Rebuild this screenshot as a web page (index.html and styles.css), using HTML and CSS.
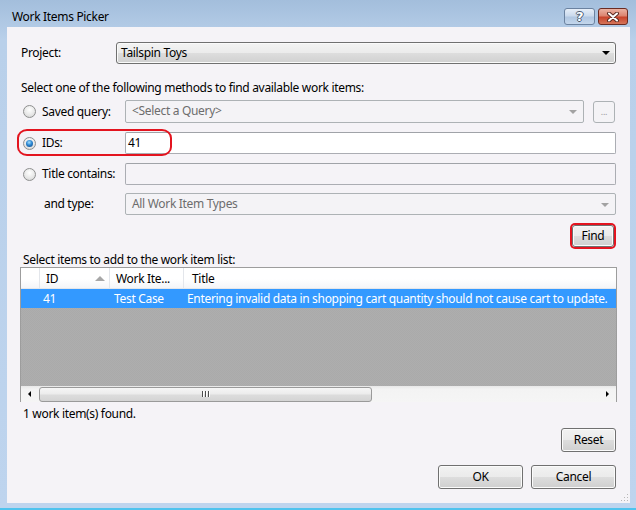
FILE: index.html
```html
<!doctype html>
<html>
<head>
<meta charset="utf-8">
<title>Work Items Picker</title>
<link rel="stylesheet" href="styles.css">
</head>
<body>
	<div id="window">
		<div class="titlebar">
			<span class="title">Work Items Picker</span>
			<span class="cap help">?</span>
			<span class="cap close">
				<svg width="14" height="10" viewBox="0 0 14 10"><path d="M3 1.5 L11 8.5 M11 1.5 L3 8.5" stroke="#5a2a22" stroke-width="4" stroke-linecap="round"/><path d="M3 1.5 L11 8.5 M11 1.5 L3 8.5" stroke="#fff" stroke-width="2" stroke-linecap="round"/></svg>
			</span>
		</div>
		<div class="client">
			<div class="row">
				<span class="plabel">Project:</span>
				<div class="combo active">Tailspin Toys<span class="arrow"></span></div>
			</div>
			<p class="hint">Select one of the following methods to find available work items:</p>
			<div class="row method saved">
				<span class="radio"></span>
				<span class="mlabel">Saved query:</span>
				<div class="combo off">&lt;Select a Query&gt;<span class="arrow"></span></div>
				<span class="browse">...</span>
			</div>
			<div class="row method ids">
				<span class="radio checked"></span>
				<span class="mlabel">IDs:</span>
				<div class="textbox">41</div>
				<span class="mark"></span>
			</div>
			<div class="row method">
				<span class="radio"></span>
				<span class="mlabel">Title contains:</span>
				<div class="textbox off"></div>
			</div>
			<div class="row method type">
				<span class="mlabel">and type:</span>
				<div class="combo off">All Work Item Types<span class="arrow"></span></div>
			</div>
			<div class="findrow">
				<span class="btn find">Find</span>
			</div>
			<p class="caption">Select items to add to the work item list:</p>
			<div class="grid">
				<div class="ghead">
					<span class="c0"></span>
					<span class="c1">ID<i class="sort"></i></span>
					<span class="c2">Work Ite...</span>
					<span class="c3">Title</span>
				</div>
				<div class="grow selected">
					<span class="c0"></span>
					<span class="c1">41</span>
					<span class="c2">Test Case</span>
					<span class="c3">Entering invalid data in shopping cart quantity should not cause cart to update.</span>
				</div>
				<div class="gbody"></div>
				<div class="hscroll">
					<span class="sarrow left"></span>
					<span class="thumb"><i></i><i></i><i></i></span>
					<span class="track"></span>
					<span class="sarrow right"></span>
				</div>
			</div>
			<p class="caption status">1 work item(s) found.</p>
			<div class="buttons reset">
				<span class="btn">Reset</span>
			</div>
			<div class="buttons">
				<span class="btn wide">OK</span>
				<span class="btn wide">Cancel</span>
			</div>
			<span class="grip"></span>
		</div>
	</div>
</body>
</html>
```
FILE: styles.css
```css
body {
	margin: 0;
	font: 12px/16px "Noto Sans", "Liberation Sans", sans-serif;
	letter-spacing: -0.32px;
	color: #000;
}
p {
	margin: 0;
}
#window {
	width: 636px;
	height: 510px;
	box-sizing: border-box;
	display: flex;
	flex-direction: column;
	background: linear-gradient(#a3bedc 0, #b9d0ea 40px, #bed4ee 100%);
	border-bottom: 2px solid #4fc3ee;
}
.titlebar {
	height: 27px;
	display: flex;
	align-items: flex-start;
	padding: 0 8px 0 12px;
}
.title {
	margin-top: 9px;
	line-height: 16px;
	flex: 1;
}
.cap {
	margin-top: 8px;
	height: 17px;
	box-sizing: border-box;
	border-radius: 3px;
	display: flex;
	align-items: center;
	justify-content: center;
}
.help {
	width: 31px;
	margin-right: 3px;
	border: 1px solid #6b82a0;
	background: linear-gradient(#e6eef8 0, #cbdaed 45%, #b1c7e2 55%, #c3d6ec 100%);
	color: #fff;
	font: bold 13px/14px "DejaVu Sans", sans-serif;
	text-shadow: -1px 0 #4a5a70, 1px 0 #4a5a70, 0 -1px #4a5a70, 0 1px #4a5a70;
}
.close {
	width: 30px;
	border: 1px solid #6a2b22;
	background: linear-gradient(#eab2a3 0, #dc8470 45%, #c8442c 55%, #d5755a 100%);
}
.client {
	flex: 1;
	margin: 0 6px 5px 7px;
	background: #f5f3f7;
	padding: 15px 14px 0;
	position: relative;
}
.row {
	display: flex;
	align-items: center;
	height: 22px;
	position: relative;
}
.plabel {
	width: 95px;
}
.combo {
	flex: 1;
	height: 100%;
	box-sizing: border-box;
	border-radius: 3px;
	position: relative;
	padding-left: 4px;
	line-height: 20px;
}
.combo.active {
	border: 1px solid #707070;
	background: linear-gradient(#f3f3f3 0, #ebebeb 50%, #dddddd 51%, #d0d0d0 100%);
	box-shadow: inset 0 0 0 1px #fafafa;
}
.combo.off {
	border: 1px solid #adb2b5;
	background: #f4f3f6;
	color: #6d6d6d;
	padding-left: 6px;
	border-radius: 2px;
}
.arrow {
	position: absolute;
	right: 5px;
	top: 8px;
	border-left: 4px solid transparent;
	border-right: 4px solid transparent;
	border-top: 4px solid #000;
}
.combo.off .arrow {
	border-top-color: #a2a2a2;
	right: 6px;
	top: 9px;
}
.hint {
	margin-top: 16px;
}
.method {
	margin-top: 9px;
}
.saved {
	margin-top: 4px;
	height: 23px;
}
.type {
	margin-top: 8px;
}
.radio {
	width: 13px;
	height: 13px;
	box-sizing: border-box;
	margin: 0 6px 0 2px;
	border-radius: 50%;
	border: 1px solid #8e8f8f;
	background: radial-gradient(circle at 50% 35%, #ffffff 0, #e8e8e8 55%, #d0d0d0 100%);
	position: relative;
}
.radio.checked::after {
	content: "";
	position: absolute;
	left: 2px;
	top: 2px;
	width: 7px;
	height: 7px;
	border-radius: 50%;
	background: radial-gradient(circle at 45% 35%, #a6e1ff 0, #2b86d2 45%, #0d3f7c 100%);
}
.mlabel {
	width: 83px;
}
.type .mlabel {
	width: 81px;
	padding-left: 23px;
}
.browse {
	width: 22px;
	height: 22px;
	box-sizing: border-box;
	margin-left: 9px;
	margin-right: 1px;
	border: 1px solid #adb2b5;
	border-radius: 3px;
	background: #f4f3f6;
	color: #9a9a9a;
	font-size: 9px;
	text-align: center;
	line-height: 20px;
}
.textbox {
	flex: 1;
	height: 100%;
	box-sizing: border-box;
	border: 1px solid #abadb3;
	border-top-color: #a0a3a8;
	border-radius: 2px;
	background: #fff;
	padding-left: 2px;
	line-height: 20px;
}
.textbox.off {
	background: #f5f3f7;
}
.mark {
	position: absolute;
	left: -4px;
	top: -3px;
	width: 155px;
	height: 27px;
	box-sizing: border-box;
	border: 2px solid #e3141f;
	border-radius: 10px / 9px;
}
.findrow {
	margin-top: 10px;
	display: flex;
	justify-content: flex-end;
	padding-right: 2px;
}
.btn {
	height: 24px;
	box-sizing: border-box;
	border: 1px solid #707070;
	border-radius: 3px;
	background: linear-gradient(#f2f2f2 0, #ebebeb 50%, #dddddd 51%, #cfcfcf 100%);
	box-shadow: inset 0 0 0 1px #fbfbfb;
	text-align: center;
	line-height: 21px;
}
.find {
	width: 42px;
	height: 22px;
	line-height: 19px;
	box-shadow: inset 0 0 0 1px #fbfbfb, 0 0 0 2px #e3141f;
}
.caption {
	margin-top: 6px;
	line-height: 14px;
	padding-left: 2px;
}
.grid {
	margin: 0 -1px;
	border: 1px solid #9d9d9d;
	border-bottom: none;
	display: flex;
	flex-direction: column;
	height: 134px;
}
.ghead,
.grow {
	display: flex;
}
.ghead {
	height: 21px;
	box-sizing: border-box;
	background: linear-gradient(#ffffff 0, #ffffff 55%, #f4f5f8 100%);
	border-bottom: 1px solid #e4e6ea;
	line-height: 21px;
}
.ghead span {
	border-right: 1px solid #e3e6eb;
	box-sizing: border-box;
	padding-left: 6px;
}
.c0 {
	width: 19px;
	flex: none;
}
.c1 {
	width: 70px;
	flex: none;
	display: flex;
	justify-content: space-between;
	align-items: center;
}
.c2 {
	width: 74px;
	flex: none;
}
.c3 {
	flex: 1;
	white-space: nowrap;
	overflow: hidden;
}
.ghead .c3 {
	padding-left: 8px;
	border-right: none;
}
.sort {
	margin-right: 4px;
	border-left: 5px solid transparent;
	border-right: 5px solid transparent;
	border-bottom: 5px solid #a7a7a7;
}
.grow {
	height: 19px;
	line-height: 19px;
}
.grow span {
	padding-left: 3px;
	box-sizing: border-box;
}
.grow .c2 {
	padding-left: 4px;
}
.selected {
	background: #3399ff;
	color: #fff;
}
.gbody {
	flex: 1;
	background-color: #acacac;
	background-image: repeating-conic-gradient(#aaaaaa 0 25%, #aeaeae 0 50%);
	background-size: 2px 2px;
}
.hscroll {
	height: 16px;
	display: flex;
	align-items: center;
	background: linear-gradient(#e8e8e8 0, #f3f3f3 20%, #f5f5f5 100%);
}
.sarrow {
	width: 18px;
	height: 16px;
	position: relative;
}
.sarrow::after {
	content: "";
	position: absolute;
	top: 5px;
	border-top: 3px solid transparent;
	border-bottom: 3px solid transparent;
}
.left::after {
	left: 7px;
	border-right: 3px solid #000;
}
.right::after {
	left: 8px;
	border-left: 3px solid #000;
}
.thumb {
	width: 333px;
	height: 15px;
	box-sizing: border-box;
	border: 1px solid #9a9a9a;
	border-radius: 3px;
	background: linear-gradient(#f6f6f6 0, #ececec 45%, #dcdcdc 55%, #d4d4d4 100%);
	display: flex;
	justify-content: center;
	align-items: center;
	gap: 2px;
}
.thumb i {
	width: 1px;
	height: 6px;
	background: #4d4d4d;
	box-shadow: 1px 0 #fff;
}
.track {
	flex: 1;
}
.status {
	margin-top: 4px;
	line-height: 16px;
}
.buttons {
	display: flex;
	justify-content: flex-end;
	gap: 8px;
	margin-top: 13px;
}
.reset {
	margin-top: 6px;
}
.reset .btn {
	width: 55px;
}
.btn.wide {
	width: 85px;
}
.grip {
	position: absolute;
	right: 2px;
	bottom: 2px;
	width: 8px;
	height: 8px;
	background-image: radial-gradient(circle, #b8b8b8 0.8px, transparent 1px);
	background-size: 3px 3px;
	clip-path: polygon(100% 0, 100% 100%, 0 100%);
}
```
